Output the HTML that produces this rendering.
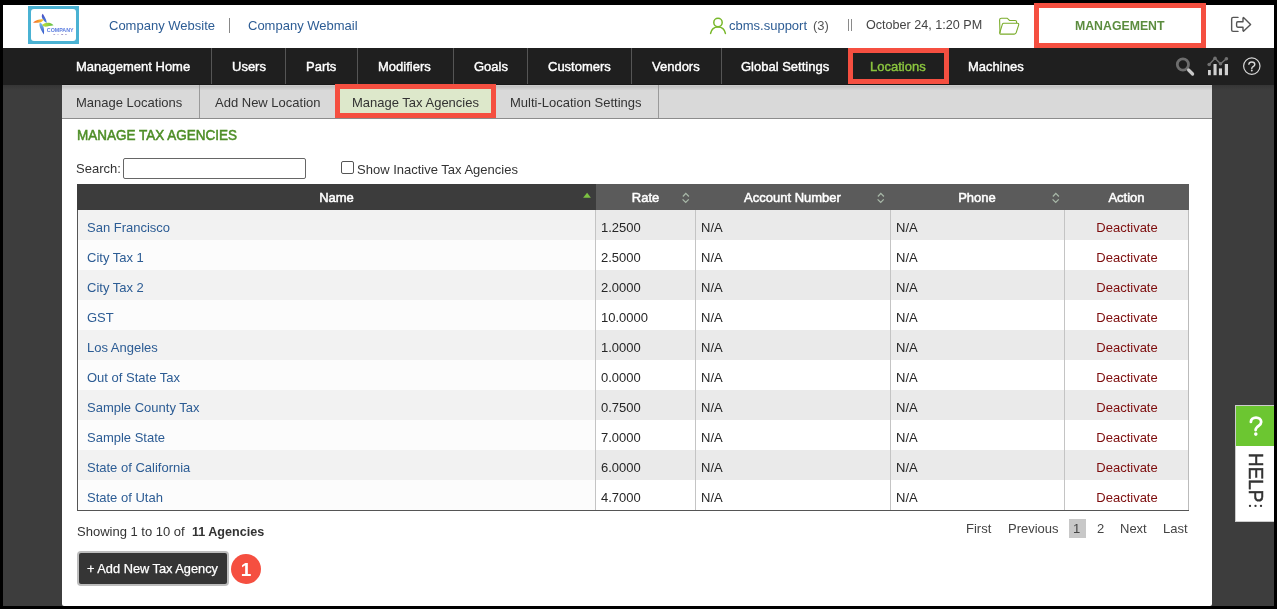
<!DOCTYPE html>
<html><head><meta charset="utf-8">
<style>
*{margin:0;padding:0;box-sizing:border-box}
html,body{width:1277px;height:609px;overflow:hidden;background:#000}
body{position:relative;will-change:transform;font-family:"Liberation Sans",sans-serif;font-size:13px;color:#333}
.a{position:absolute;white-space:nowrap}
#hdr{left:3px;top:5px;width:1271px;height:43px;background:#fff}
#nav{left:3px;top:48px;width:1271px;height:37px;background:#1f1f1f}
#side{left:3px;top:85px;width:1271px;height:521px;background:linear-gradient(#353535,#3d3d3d 5px)}
#sub{left:62px;top:84px;width:1150px;height:35px;background:linear-gradient(#181818 0px,#181818 1px,#cfcfcf 1px,#c3c3c3 2.5px,#d9d9d9 6.5px);border-bottom:1px solid #8c8c8c}
#content{left:62px;top:119px;width:1150px;height:487px;background:#fff;border-radius:0 0 2px 2px}
.hl{color:#2c5c94;font-size:13px}
.nv{color:#fff;font-size:13px;top:59px;-webkit-text-stroke:0.4px #fff}
.sep{width:1px;top:48px;height:36px;background:#555}
.sn{color:#333;font-size:13px;top:95px}
.ssep{width:1px;top:85px;height:33px;background:#9a9a9a}
.red{border:5px solid #f54f40}
.th{top:184px;height:26px;background:#5b5b5b;color:#fff;font-size:13px;line-height:27px;text-align:center;overflow:hidden;-webkit-text-stroke:0.5px #fff}
.row{left:77px;width:1111px;height:30px}
.td{font-size:13px;line-height:30px;top:3px;color:#262626}
.lk{color:#2c5c94}
.dv{color:#7d0c0c}
.pg{top:521px;font-size:13px;color:#444}
</style></head><body>
<div class="a" id="hdr"></div>
<div class="a" id="nav"></div>
<div class="a" id="side"></div>
<div class="a" id="sub"></div>
<div class="a" id="content"></div>

<!-- logo -->
<div class="a" style="left:28px;top:6px;width:51px;height:38px;background:#4ab2d3"></div>
<div class="a" style="left:31px;top:9px;width:45px;height:32px;background:#fff;border-radius:3px"></div>
<svg class="a" style="left:28px;top:6px" width="51" height="38" viewBox="0 0 51 38">
  <defs><linearGradient id="og" x1="0" x2="1"><stop offset="0" stop-color="#f0602a"/><stop offset="1" stop-color="#f9cf2c"/></linearGradient>
  <linearGradient id="gg" x1="0" x2="1"><stop offset="0" stop-color="#c5df3a"/><stop offset="1" stop-color="#5cbf4a"/></linearGradient>
  <linearGradient id="bb" x1="0" x2="0" y1="0" y2="1"><stop offset="0" stop-color="#7cc0ee"/><stop offset="1" stop-color="#3050c8"/></linearGradient>
  <linearGradient id="bt" x1="0" x2="0" y1="0" y2="1"><stop offset="0" stop-color="#4848c0"/><stop offset="1" stop-color="#4a8ae0"/></linearGradient></defs>
  <path d="M14.8 7.8 C16.2 10.5 18.6 13.2 18.8 17 C16.8 16 14.2 13.5 13.8 10.8 C13.7 9.6 14.1 8.5 14.8 7.8 Z" fill="url(#bt)"/>
  <path d="M12 16.6 C15 18.2 16.8 22 15.9 28.4 C14 25.8 11.6 22 11.4 19 C11.3 18 11.6 17.2 12 16.6 Z" fill="url(#bb)"/>
  <path d="M5 16.4 C8.5 13.8 12.2 12.8 15.6 13.4 C15.2 15 13.4 16 11.2 16.5 C9 16.9 6.8 16.9 5 16.4 Z" fill="url(#og)"/>
  <path d="M14.2 18.8 C16.2 16.8 19.5 16.2 22.2 17 C23.6 17.5 24.7 18.3 25.6 19.3 C22.2 19.8 19 20.8 16.5 20.6 C15.4 20.5 14.7 19.8 14.2 18.8 Z" fill="url(#gg)"/>
  <text x="18.8" y="25.9" font-family="Liberation Sans" font-size="5.1" font-weight="bold" fill="#5a7ce0" textLength="26.8" lengthAdjust="spacingAndGlyphs">COMPANY</text>
  <text x="25.4" y="29" font-family="Liberation Sans" font-size="2.4" font-weight="bold" fill="#6a5aa8" textLength="13.5" lengthAdjust="spacing">NAME</text>
</svg>

<span class="a hl" style="left:109px;top:18px">Company Website</span>
<div class="a" style="left:229px;top:18px;width:1px;height:15px;background:#888"></div>
<span class="a hl" style="left:248px;top:18px">Company Webmail</span>

<!-- user icon -->
<svg class="a" style="left:705px;top:12px" width="30" height="28" viewBox="0 0 30 28">
  <circle cx="13" cy="10.5" r="4.2" stroke="#78b82a" stroke-width="1.5" fill="none"/>
  <path d="M5.6 21.4 C6.5 17 9.5 15 13 15 C16.5 15 19.5 17 20.4 21.4" stroke="#78b82a" stroke-width="1.5" fill="none" stroke-linecap="round"/>
</svg>
<span class="a hl" style="left:729px;top:18px">cbms.support</span>
<span class="a" style="left:813px;top:18px;color:#555">(3)</span>
<div class="a" style="left:848px;top:19px;width:1px;height:12px;background:#8a8a8a"></div><div class="a" style="left:851px;top:19px;width:1px;height:12px;background:#8a8a8a"></div>
<span class="a" style="left:866px;top:18px;color:#444;font-size:12.6px">October 24, 1:20 PM</span>

<!-- folder -->
<svg class="a" style="left:995px;top:12px" width="30" height="28" viewBox="0 0 30 28">
  <path d="M5 21 L4.6 8 Q4.6 6.2 6.4 6.2 L12.2 6.2 L14.5 8.5 L20.2 8.5 Q21.6 8.5 21.6 10 L21.6 11" stroke="#7aac2a" stroke-width="1.1" fill="none"/>
  <path d="M5.5 22.1 L19.3 22.1 Q20.8 22.1 21.2 20.7 L23.7 12.8 Q23.9 11.3 22.5 11.3 L8.6 11.3 Q7.8 11.3 7.4 12.2 L4.8 20.5 Q4.6 22.1 5.5 22.1 Z" stroke="#7aac2a" stroke-width="1.1" fill="none"/>
</svg>

<!-- management box -->
<div class="a red" style="left:1034px;top:3px;width:172px;height:45px"></div>
<span class="a" style="left:1075px;top:19px;color:#5b8c3e;font-weight:bold;font-size:12.3px">MANAGEMENT</span>

<!-- logout -->
<svg class="a" style="left:1225px;top:10px" width="32" height="30" viewBox="0 0 32 30">
  <path d="M13 7.4 L8.1 7.4 Q6.65 7.4 6.65 8.9 L6.65 20 Q6.65 21.4 8.1 21.4 L13 21.4" stroke="#555" stroke-width="1.4" fill="none" stroke-linecap="round"/>
  <path d="M18.5 7.6 L25.6 14.4 L18.5 21.2 L18 20.8 L18 17.2 L12.8 17.2 Q11.6 17.2 11.6 15.8 L11.6 13.2 Q11.6 11.8 12.8 11.8 L18 11.8 L18 8 Z" stroke="#555" stroke-width="1.4" fill="none" stroke-linejoin="round"/>
</svg>

<!-- nav -->
<span class="a nv" style="left:76px">Management Home</span>
<div class="a sep" style="left:211px"></div>
<span class="a nv" style="left:232px">Users</span>
<div class="a sep" style="left:285px"></div>
<span class="a nv" style="left:306px">Parts</span>
<div class="a sep" style="left:357px"></div>
<span class="a nv" style="left:378px">Modifiers</span>
<div class="a sep" style="left:453px"></div>
<span class="a nv" style="left:474px">Goals</span>
<div class="a sep" style="left:527px"></div>
<span class="a nv" style="left:548px">Customers</span>
<div class="a sep" style="left:631px"></div>
<span class="a nv" style="left:652px">Vendors</span>
<div class="a sep" style="left:721px"></div>
<span class="a nv" style="left:741px">Global Settings</span>
<div class="a red" style="left:848px;top:48px;width:101px;height:36px"></div>
<span class="a nv" style="left:870px;color:#8cc63f;-webkit-text-stroke:0.4px #8cc63f">Locations</span>
<span class="a nv" style="left:968px">Machines</span>

<!-- nav icons -->
<svg class="a" style="left:1170px;top:52px" width="100" height="28" viewBox="0 0 100 28">
  <circle cx="12.9" cy="12.5" r="5.6" stroke="#6d6d6d" stroke-width="2.8" fill="none"/>
  <path d="M18.6 18 L22.6 22" stroke="#c8c8c8" stroke-width="3.2" stroke-linecap="round"/>
  <rect x="38" y="18" width="2.8" height="5.2" fill="#d0d0d0"/>
  <rect x="43.5" y="12" width="3.1" height="11.2" fill="#d0d0d0"/>
  <rect x="48.9" y="16.4" width="3.1" height="6.8" fill="#d0d0d0"/>
  <rect x="54.8" y="12" width="3.2" height="11.2" fill="#d0d0d0"/>
  <path d="M39.2 12.5 L45 6.3 L50.5 11.7 L56.4 6.7" stroke="#707070" stroke-width="1.5" fill="none"/>
  <circle cx="39.2" cy="12.5" r="1.8" fill="#707070"/>
  <circle cx="45" cy="6.3" r="1.8" fill="#707070"/>
  <circle cx="50.5" cy="11.7" r="1.8" fill="#707070"/>
  <circle cx="56.4" cy="6.7" r="1.8" fill="#707070"/>
  <circle cx="81.8" cy="14.1" r="8.2" stroke="#d8d8d8" stroke-width="1.2" fill="none"/>
  <path d="M78.9 12.3 C78.9 10.8 80.2 10 81.8 10 C83.4 10 84.8 10.8 84.8 12.4 C84.8 13.8 83.4 14.3 82.5 15 C81.9 15.5 81.8 16 81.8 16.7" stroke="#d8d8d8" stroke-width="1.4" fill="none" stroke-linecap="round"/><circle cx="81.8" cy="18.6" r="0.95" fill="#d8d8d8"/>
</svg>

<!-- sub nav -->
<span class="a sn" style="left:76px">Manage Locations</span>
<div class="a ssep" style="left:199px"></div>
<span class="a sn" style="left:215px">Add New Location</span>
<div class="a" style="left:340px;top:89px;width:151px;height:24px;background:#dde8cb"></div>
<div class="a red" style="left:335px;top:84px;width:161px;height:34px"></div>
<span class="a sn" style="left:352px">Manage Tax Agencies</span>
<span class="a sn" style="left:510px">Multi-Location Settings</span>
<div class="a ssep" style="left:658px"></div>

<!-- content -->
<span class="a" style="left:77px;top:126px;color:#4e8e27;font-size:15px;-webkit-text-stroke:0.55px #4e8e27;transform-origin:0 0;transform:scaleX(0.9)">MANAGE TAX AGENCIES</span>
<span class="a" style="left:76px;top:161px;color:#333">Search:</span>
<div class="a" style="left:123px;top:158px;width:183px;height:21px;border:1px solid #666;border-radius:2px"></div>
<div class="a" style="left:341px;top:161px;width:13px;height:13px;border:1px solid #555;border-radius:2px;background:#fff"></div>
<span class="a" style="left:357px;top:162px;color:#333">Show Inactive Tax Agencies</span>

<!-- table header -->
<div class="a th" style="left:77px;width:519px;background:#3c3c3c">Name</div>
<div class="a th" style="left:596px;width:99px">Rate</div>
<div class="a th" style="left:695px;width:195px">Account Number</div>
<div class="a th" style="left:890px;width:174px">Phone</div>
<div class="a th" style="left:1064px;width:125px">Action</div>
<svg class="a" style="left:575px;top:186px" width="25" height="22"><path d="M12.1 6.7 L15.9 11.7 L8.1 11.7 Z" fill="#7cc242"/></svg>
<svg class="a" style="left:675px;top:186px" width="25" height="22"><path d="M7.9 10.5 L10.8 7.4 L13.9 10.5 M7.6 13.4 L10.7 16.4 L13.7 13.4" stroke="#a8b8a8" stroke-width="1.3" fill="none"/></svg>
<svg class="a" style="left:870px;top:186px" width="25" height="22"><path d="M7.9 10.5 L10.8 7.4 L13.9 10.5 M7.6 13.4 L10.7 16.4 L13.7 13.4" stroke="#a8b8a8" stroke-width="1.3" fill="none"/></svg>
<svg class="a" style="left:1045px;top:186px" width="25" height="22"><path d="M7.9 10.5 L10.8 7.4 L13.9 10.5 M7.6 13.4 L10.7 16.4 L13.7 13.4" stroke="#a8b8a8" stroke-width="1.3" fill="none"/></svg>

<div class="a row" style="top:210px;background:#eaeaea"><div class="a" style="left:0;top:0;width:518px;height:30px;background:#f2f2f2"></div><div class="a" style="left:518px;top:0;width:1px;height:30px;background:#c4c4c4"></div><div class="a" style="left:618px;top:0;width:1px;height:30px;background:#c4c4c4"></div><div class="a" style="left:813px;top:0;width:1px;height:30px;background:#c4c4c4"></div><div class="a" style="left:987px;top:0;width:1px;height:30px;background:#c4c4c4"></div><span class="a td lk" style="left:10px">San Francisco</span><span class="a td" style="left:524px">1.2500</span><span class="a td" style="left:624px">N/A</span><span class="a td" style="left:819px">N/A</span><span class="a td dv" style="left:988px;width:124px;text-align:center">Deactivate</span></div>
<div class="a row" style="top:240px;background:#ffffff"><div class="a" style="left:0;top:0;width:518px;height:30px;background:#fcfcfc"></div><div class="a" style="left:518px;top:0;width:1px;height:30px;background:#c4c4c4"></div><div class="a" style="left:618px;top:0;width:1px;height:30px;background:#c4c4c4"></div><div class="a" style="left:813px;top:0;width:1px;height:30px;background:#c4c4c4"></div><div class="a" style="left:987px;top:0;width:1px;height:30px;background:#c4c4c4"></div><span class="a td lk" style="left:10px">City Tax 1</span><span class="a td" style="left:524px">2.5000</span><span class="a td" style="left:624px">N/A</span><span class="a td" style="left:819px">N/A</span><span class="a td dv" style="left:988px;width:124px;text-align:center">Deactivate</span></div>
<div class="a row" style="top:270px;background:#eaeaea"><div class="a" style="left:0;top:0;width:518px;height:30px;background:#f2f2f2"></div><div class="a" style="left:518px;top:0;width:1px;height:30px;background:#c4c4c4"></div><div class="a" style="left:618px;top:0;width:1px;height:30px;background:#c4c4c4"></div><div class="a" style="left:813px;top:0;width:1px;height:30px;background:#c4c4c4"></div><div class="a" style="left:987px;top:0;width:1px;height:30px;background:#c4c4c4"></div><span class="a td lk" style="left:10px">City Tax 2</span><span class="a td" style="left:524px">2.0000</span><span class="a td" style="left:624px">N/A</span><span class="a td" style="left:819px">N/A</span><span class="a td dv" style="left:988px;width:124px;text-align:center">Deactivate</span></div>
<div class="a row" style="top:300px;background:#ffffff"><div class="a" style="left:0;top:0;width:518px;height:30px;background:#fcfcfc"></div><div class="a" style="left:518px;top:0;width:1px;height:30px;background:#c4c4c4"></div><div class="a" style="left:618px;top:0;width:1px;height:30px;background:#c4c4c4"></div><div class="a" style="left:813px;top:0;width:1px;height:30px;background:#c4c4c4"></div><div class="a" style="left:987px;top:0;width:1px;height:30px;background:#c4c4c4"></div><span class="a td lk" style="left:10px">GST</span><span class="a td" style="left:524px">10.0000</span><span class="a td" style="left:624px">N/A</span><span class="a td" style="left:819px">N/A</span><span class="a td dv" style="left:988px;width:124px;text-align:center">Deactivate</span></div>
<div class="a row" style="top:330px;background:#eaeaea"><div class="a" style="left:0;top:0;width:518px;height:30px;background:#f2f2f2"></div><div class="a" style="left:518px;top:0;width:1px;height:30px;background:#c4c4c4"></div><div class="a" style="left:618px;top:0;width:1px;height:30px;background:#c4c4c4"></div><div class="a" style="left:813px;top:0;width:1px;height:30px;background:#c4c4c4"></div><div class="a" style="left:987px;top:0;width:1px;height:30px;background:#c4c4c4"></div><span class="a td lk" style="left:10px">Los Angeles</span><span class="a td" style="left:524px">1.0000</span><span class="a td" style="left:624px">N/A</span><span class="a td" style="left:819px">N/A</span><span class="a td dv" style="left:988px;width:124px;text-align:center">Deactivate</span></div>
<div class="a row" style="top:360px;background:#ffffff"><div class="a" style="left:0;top:0;width:518px;height:30px;background:#fcfcfc"></div><div class="a" style="left:518px;top:0;width:1px;height:30px;background:#c4c4c4"></div><div class="a" style="left:618px;top:0;width:1px;height:30px;background:#c4c4c4"></div><div class="a" style="left:813px;top:0;width:1px;height:30px;background:#c4c4c4"></div><div class="a" style="left:987px;top:0;width:1px;height:30px;background:#c4c4c4"></div><span class="a td lk" style="left:10px">Out of State Tax</span><span class="a td" style="left:524px">0.0000</span><span class="a td" style="left:624px">N/A</span><span class="a td" style="left:819px">N/A</span><span class="a td dv" style="left:988px;width:124px;text-align:center">Deactivate</span></div>
<div class="a row" style="top:390px;background:#eaeaea"><div class="a" style="left:0;top:0;width:518px;height:30px;background:#f2f2f2"></div><div class="a" style="left:518px;top:0;width:1px;height:30px;background:#c4c4c4"></div><div class="a" style="left:618px;top:0;width:1px;height:30px;background:#c4c4c4"></div><div class="a" style="left:813px;top:0;width:1px;height:30px;background:#c4c4c4"></div><div class="a" style="left:987px;top:0;width:1px;height:30px;background:#c4c4c4"></div><span class="a td lk" style="left:10px">Sample County Tax</span><span class="a td" style="left:524px">0.7500</span><span class="a td" style="left:624px">N/A</span><span class="a td" style="left:819px">N/A</span><span class="a td dv" style="left:988px;width:124px;text-align:center">Deactivate</span></div>
<div class="a row" style="top:420px;background:#ffffff"><div class="a" style="left:0;top:0;width:518px;height:30px;background:#fcfcfc"></div><div class="a" style="left:518px;top:0;width:1px;height:30px;background:#c4c4c4"></div><div class="a" style="left:618px;top:0;width:1px;height:30px;background:#c4c4c4"></div><div class="a" style="left:813px;top:0;width:1px;height:30px;background:#c4c4c4"></div><div class="a" style="left:987px;top:0;width:1px;height:30px;background:#c4c4c4"></div><span class="a td lk" style="left:10px">Sample State</span><span class="a td" style="left:524px">7.0000</span><span class="a td" style="left:624px">N/A</span><span class="a td" style="left:819px">N/A</span><span class="a td dv" style="left:988px;width:124px;text-align:center">Deactivate</span></div>
<div class="a row" style="top:450px;background:#eaeaea"><div class="a" style="left:0;top:0;width:518px;height:30px;background:#f2f2f2"></div><div class="a" style="left:518px;top:0;width:1px;height:30px;background:#c4c4c4"></div><div class="a" style="left:618px;top:0;width:1px;height:30px;background:#c4c4c4"></div><div class="a" style="left:813px;top:0;width:1px;height:30px;background:#c4c4c4"></div><div class="a" style="left:987px;top:0;width:1px;height:30px;background:#c4c4c4"></div><span class="a td lk" style="left:10px">State of California</span><span class="a td" style="left:524px">6.0000</span><span class="a td" style="left:624px">N/A</span><span class="a td" style="left:819px">N/A</span><span class="a td dv" style="left:988px;width:124px;text-align:center">Deactivate</span></div>
<div class="a row" style="top:480px;background:#ffffff"><div class="a" style="left:0;top:0;width:518px;height:30px;background:#fcfcfc"></div><div class="a" style="left:518px;top:0;width:1px;height:30px;background:#c4c4c4"></div><div class="a" style="left:618px;top:0;width:1px;height:30px;background:#c4c4c4"></div><div class="a" style="left:813px;top:0;width:1px;height:30px;background:#c4c4c4"></div><div class="a" style="left:987px;top:0;width:1px;height:30px;background:#c4c4c4"></div><span class="a td lk" style="left:10px">State of Utah</span><span class="a td" style="left:524px">4.7000</span><span class="a td" style="left:624px">N/A</span><span class="a td" style="left:819px">N/A</span><span class="a td dv" style="left:988px;width:124px;text-align:center">Deactivate</span></div>
<!-- table borders -->
<div class="a" style="left:77px;top:210px;width:1px;height:301px;background:#555"></div>
<div class="a" style="left:77px;top:510px;width:1112px;height:1px;background:#555"></div>
<div class="a" style="left:1188px;top:210px;width:1px;height:300px;background:#bbb"></div>

<span class="a" style="left:77px;top:524px;color:#333">Showing 1 to 10 of &nbsp;<b style="color:#333;font-size:12.6px">11 Agencies</b></span>

<span class="a pg" style="left:966px">First</span>
<span class="a pg" style="left:1008px">Previous</span>
<div class="a" style="left:1069px;top:519px;width:17px;height:19px;background:#c8c8c8"></div>
<span class="a pg" style="left:1073px">1</span>
<span class="a pg" style="left:1097px">2</span>
<span class="a pg" style="left:1120px">Next</span>
<span class="a pg" style="left:1163px">Last</span>

<div class="a" style="left:77px;top:551px;width:152px;height:35px;border:2px solid #bdbdbd;border-radius:4px;background:#353535"></div>
<span class="a" style="left:87px;top:561px;color:#fff;font-size:12.8px;-webkit-text-stroke:0.25px #fff">+ Add New Tax Agency</span>
<div class="a" style="left:231px;top:554px;width:30px;height:30px;border-radius:50%;background:#f54f40"></div>
<span class="a" style="left:231px;top:559px;width:30px;text-align:center;color:#fff;font-weight:bold;font-size:19px;line-height:22px">1</span>

<!-- help widget -->
<div class="a" style="left:1235px;top:405px;width:39px;height:117px;background:#fff;border:1px solid #ccc;border-right:none"></div>
<div class="a" style="left:1236px;top:406px;width:38px;height:40px;background:#6cc631"></div>
<svg class="a" style="left:1236px;top:406px" width="38" height="40" viewBox="1236 406 38 40"><path d="M1250.9 421.9 C1250.9 419.5 1253 417.6 1256 417.6 C1259 417.6 1261.2 419.6 1261.2 422 C1261.2 424.5 1259 425.5 1257.2 427 C1256 428 1255.6 428.8 1255.6 430.1" stroke="#fff" stroke-width="2.8" fill="none" stroke-linecap="round"/><circle cx="1255.8" cy="434.1" r="1.8" fill="#fff"/></svg>
<div class="a" style="left:1267px;top:453px;transform-origin:0 0;transform:rotate(90deg) scaleX(0.9);color:#333;font-size:21px;line-height:21px;-webkit-text-stroke:0.5px #333">HELP</div>
<svg class="a" style="left:1244px;top:500px" width="24" height="12" viewBox="1244 500 24 12"><circle cx="1250" cy="505.9" r="1.15" fill="#333"/><circle cx="1255.5" cy="505.9" r="1.15" fill="#333"/><circle cx="1261" cy="505.9" r="1.15" fill="#333"/></svg>
</body></html>
